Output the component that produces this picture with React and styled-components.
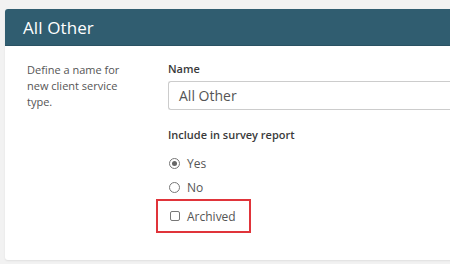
import React from "react";
import styled, { createGlobalStyle } from "styled-components";

const Global = createGlobalStyle`
  html, body { margin: 0; padding: 0; background: #f2f2f2; }
  body { font-family: "Open Sans", "Liberation Sans", sans-serif; overflow: hidden; }
  * { box-sizing: border-box; }
`;

const Page = styled.div`
  width: 450px;
  height: 264px;
  padding: 9px 0 0 5px;
  overflow: hidden;
`;

const Card = styled.div`
  width: 470px;
  height: 251px;
  background: #fff;
  border-radius: 3px;
  box-shadow: 0 1px 2px rgba(0,0,0,0.08);
  overflow: hidden;
`;

const Header = styled.div`
  height: 37px;
  background: #305d70;
  border-bottom: 1px solid #2a5263;
  display: flex;
  align-items: center;
  padding-left: 18px;
  color: #fff;
  font-size: 17px;
  letter-spacing: 0.1px;
`;

const Body = styled.div`
  display: grid;
  grid-template-columns: 141px 1fr;
  padding: 16px 0 0 22px;
`;

const Help = styled.p`
  margin: 0;
  width: 105px;
  font-size: 11px;
  line-height: 16px;
  color: #555;
`;

const Field = styled.div`
  display: flex;
  flex-direction: column;
`;

const Label = styled.div`
  font-size: 11px;
  line-height: 14px;
  font-weight: 600;
  color: #3a3a3a;
  margin: ${p => p.$mt || 0}px 0 0;
`;

const Input = styled.div`
  margin-top: 5px;
  height: 29px;
  border: 1px solid #ccc;
  border-right: none;
  border-radius: 3px 0 0 3px;
  display: flex;
  align-items: center;
  padding-left: 10px;
  font-size: 14px;
  color: #555;
`;

const Options = styled.div`
  display: flex;
  flex-direction: column;
  margin-top: 9px;
`;

const Option = styled.div`
  display: flex;
  align-items: center;
  gap: 7px;
  height: 24px;
  font-size: 12px;
  color: #555;
`;

const Radio = styled.span`
  width: 11px;
  height: 11px;
  border-radius: 50%;
  border: 1px solid #777;
  margin-left: 1px;
  display: flex;
  align-items: center;
  justify-content: center;
  &::after {
    content: "";
    width: 5px;
    height: 5px;
    border-radius: 50%;
    background: ${p => (p.$checked ? "#666" : "transparent")};
  }
`;

const Highlight = styled.div`
  width: 95px;
  height: 34px;
  margin: 0 0 0 -12px;
  border: 2px solid #e0343a;
  display: flex;
  align-items: center;
  padding-left: 11px;
`;

const Check = styled.span`
  width: 10px;
  height: 10px;
  border: 1px solid #777;
  border-radius: 2px;
  margin-left: 1px;
`;

export default function App() {
  return (
    <>
      <Global />
      <Page>
        <Card>
          <Header>All Other</Header>
          <Body>
            <Help>Define a name for new client service type.</Help>
            <Field>
              <Label>Name</Label>
              <Input>All Other</Input>
              <Label $mt={18}>Include in survey report</Label>
              <Options>
                <Option><Radio $checked />Yes</Option>
                <Option><Radio />No</Option>
              </Options>
              <Highlight>
                <Option><Check />Archived</Option>
              </Highlight>
            </Field>
          </Body>
        </Card>
      </Page>
    </>
  );
}
